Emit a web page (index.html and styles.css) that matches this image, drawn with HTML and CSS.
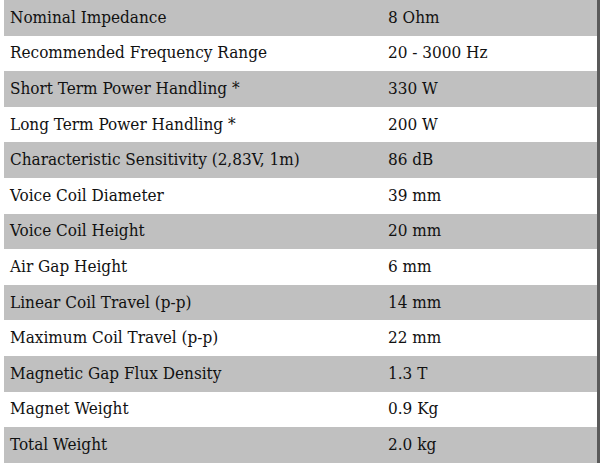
FILE: index.html
```html
<!DOCTYPE html>
<html>
<head>
<meta charset="utf-8">
<link rel="stylesheet" href="styles.css">
</head>
<body>
<div class="specs">
  <div class="row alt"><div class="k">Nominal Impedance</div><div class="v">8 Ohm</div></div>
  <div class="row"><div class="k">Recommended Frequency Range</div><div class="v">20 - 3000 Hz</div></div>
  <div class="row alt"><div class="k">Short Term Power Handling *</div><div class="v">330 W</div></div>
  <div class="row"><div class="k">Long Term Power Handling *</div><div class="v">200 W</div></div>
  <div class="row alt"><div class="k">Characteristic Sensitivity (2,83V, 1m)</div><div class="v">86 dB</div></div>
  <div class="row"><div class="k">Voice Coil Diameter</div><div class="v">39 mm</div></div>
  <div class="row alt"><div class="k">Voice Coil Height</div><div class="v">20 mm</div></div>
  <div class="row"><div class="k">Air Gap Height</div><div class="v">6 mm</div></div>
  <div class="row alt"><div class="k">Linear Coil Travel (p-p)</div><div class="v">14 mm</div></div>
  <div class="row"><div class="k">Maximum Coil Travel (p-p)</div><div class="v">22 mm</div></div>
  <div class="row alt"><div class="k">Magnetic Gap Flux Density</div><div class="v">1.3 T</div></div>
  <div class="row"><div class="k">Magnet Weight</div><div class="v">0.9 Kg</div></div>
  <div class="row alt"><div class="k">Total Weight</div><div class="v">2.0 kg</div></div>
</div>
</body>
</html>
```
FILE: styles.css
```css
html, body {
  margin: 0;
  padding: 0;
  background: #ffffff;
}
.specs {
  width: 600px;
  height: 463px;
  box-sizing: border-box;
  padding-left: 4px;
  border-right: 3px solid #5a5a5a;
  font-family: "DejaVu Serif Condensed", "DejaVu Serif", serif;
  font-stretch: condensed;
  font-size: 17px;
  color: #111111;
}
.row {
  display: grid;
  grid-template-columns: 384px 1fr;
  height: 35.6px;
  align-items: center;
}
.row.alt {
  background: #c0c0c0;
}
.k {
  padding-left: 6px;
  padding-bottom: 2px;
}
.v {
  padding-bottom: 2px;
}
```
